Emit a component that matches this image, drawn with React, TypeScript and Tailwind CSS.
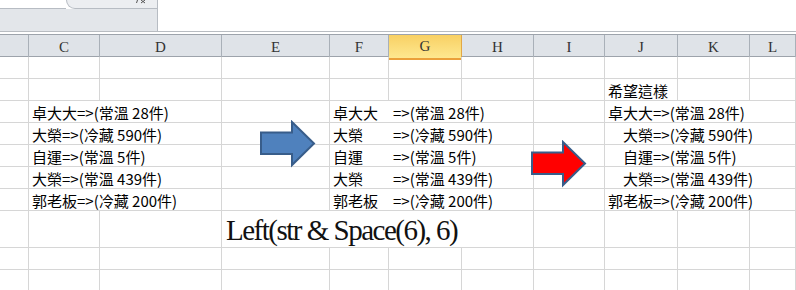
import React from "react";

const COLS = ["B", "C", "D", "E", "F", "G", "H", "I", "J", "K", "L"];

const SPAN: Record<number, string> = {
  1: "col-span-1",
  2: "col-span-2",
  3: "col-span-3",
  4: "col-span-4",
};

const CELL_FONT = "font-['Noto_Sans_CJK_TC','Noto_Sans',sans-serif] text-[15px] text-black";

type Seg = { span: number; node?: React.ReactNode };

const DATA = [
  { name: "卓大大", rest: "=>(常溫 28件)" },
  { name: "大榮", rest: "=>(冷藏 590件)" },
  { name: "自運", rest: "=>(常溫 5件)" },
  { name: "大榮", rest: "=>(常溫 439件)" },
  { name: "郭老板", rest: "=>(冷藏 200件)" },
];

function Plain({ text }: { text: string }) {
  return <span className="pl-[3px] whitespace-nowrap">{text}</span>;
}

// Left(str & Space(6), 6) style: name in a fixed-width box
function Padded({ name, rest }: { name: string; rest: string }) {
  return (
    <span className="pl-[3px] flex whitespace-nowrap">
      <span className="w-[60px]">{name}</span>
      <span>{rest}</span>
    </span>
  );
}

// wanted result: short names pushed right
function RightName({ name, rest }: { name: string; rest: string }) {
  return (
    <span className="pl-[3px] flex whitespace-nowrap">
      <span className="w-[45px] text-right">{name}</span>
      <span>{rest}</span>
    </span>
  );
}

function dataRow(i: number): Seg[] {
  const d = DATA[i];
  const wanted =
    i === 0 || i === 4 ? (
      <Plain text={d.name + d.rest} />
    ) : (
      <RightName name={d.name} rest={d.rest} />
    );
  return [
    { span: 1 },
    { span: 2, node: <Plain text={d.name + d.rest} /> },
    { span: 1 },
    { span: 3, node: <Padded name={d.name} rest={d.rest} /> },
    { span: 1 },
    { span: 3, node: wanted },
  ];
}

const ROWS: { h: string; segs: Seg[] }[] = [
  { h: "h-[22px]", segs: COLS.map(() => ({ span: 1 })) },
  {
    h: "h-[22px]",
    segs: [
      ...COLS.slice(0, 8).map(() => ({ span: 1 })),
      { span: 1, node: <Plain text="希望這樣" /> },
      { span: 1 },
      { span: 1 },
    ],
  },
  ...DATA.map((_, i) => ({ h: "h-[22px]", segs: dataRow(i) })),
  {
    h: "h-[37px]",
    segs: [
      { span: 1 },
      { span: 1 },
      { span: 1 },
      {
        span: 4,
        node: (
          <span className="pl-[4px] pb-[1px] whitespace-nowrap font-['Liberation_Serif',serif] text-[29px] leading-[32px] tracking-[-1.5px] text-[#111]">
            Left(str &amp; Space(6), 6)
          </span>
        ),
      },
      { span: 1 },
      { span: 1 },
      { span: 1 },
      { span: 1 },
    ],
  },
  { h: "h-[22px]", segs: COLS.map(() => ({ span: 1 })) },
  { h: "h-[22px]", segs: COLS.map(() => ({ span: 1 })) },
];

const GRID =
  "grid grid-cols-[29px_71px_122px_108px_59px_73px_72px_71px_73px_72px_1fr]";

function Arrow({ fill, className }: { fill: string; className: string }) {
  return (
    <svg className={className} width="58" height="48" viewBox="0 0 58 48">
      <path
        d="M2 12.5 H33 V2 L55 23.5 L33 45 V34 H2 Z"
        fill={fill}
        stroke="#385d8a"
        strokeWidth="2"
        strokeLinejoin="miter"
      />
    </svg>
  );
}

export default function App() {
  return (
    <div className="relative w-[796px] h-[290px] overflow-hidden bg-white">
      {/* ribbon remnant */}
      <div className="h-[31px] flex">
        <div className="w-[158px] flex flex-col">
          <div className="h-[9px] flex">
            <div className="w-[66px] border-b border-[#b7bcc3] bg-white" />
            <div className="flex-1 relative overflow-hidden bg-[#eceef1] border-l border-b border-r border-[#b7bcc3] rounded-bl-[10px]">
              {/* bottom of the fx glyph */}
              <svg className="absolute right-[10px] top-0" width="12" height="4" viewBox="0 0 12 4">
                <path d="M2.5 0 L1.5 3 M6 0 L10 3 M10 0 L6 3" stroke="#555" strokeWidth="1" fill="none" />
              </svg>
            </div>
          </div>
          <div className="flex-1 bg-[#e3e6ea] border-r border-[#b7bcc3]" />
        </div>
        <div className="flex-1" />
      </div>
      <div className="h-px bg-[#b8bcc1]" />
      <div className="h-[2px] bg-white" />

      {/* column headers */}
      <div className={GRID + " h-[23px] border-t border-[#9da3ab] border-b border-b-[#9da3ab] bg-[#dfe3e8]"}>
        {COLS.map((c, i) =>
          c === "G" ? (
            <div
              key={c}
              className="flex items-center justify-center bg-gradient-to-b from-[#f8d063] to-[#fee88f] border-r border-[#e2a845] border-b-2 border-b-[#eba03a] font-['Liberation_Serif',serif] text-[15px] text-[#333]"
            >
              {c}
            </div>
          ) : (
            <div
              key={c}
              className="flex items-center justify-center border-r border-[#a9b0b8] font-['Liberation_Serif',serif] text-[15px] text-[#333]"
            >
              {i === 0 ? "" : c}
            </div>
          )
        )}
      </div>

      {/* cells */}
      <div className={GRID + " " + CELL_FONT}>
        {ROWS.map((r, ri) =>
          r.segs.map((s, si) => (
            <div
              key={ri + "-" + si}
              className={
                SPAN[s.span] +
                " " +
                r.h +
                " flex items-end border-r border-b border-[#d6d6d6] leading-[19px]"
              }
            >
              {s.node}
            </div>
          ))
        )}
      </div>

      {/* shapes drawn over the sheet */}
      <Arrow fill="#4f81bd" className="absolute left-[259px] top-[120px]" />
      <Arrow fill="#ff0000" className="absolute left-[530px] top-[140px]" />
    </div>
  );
}
